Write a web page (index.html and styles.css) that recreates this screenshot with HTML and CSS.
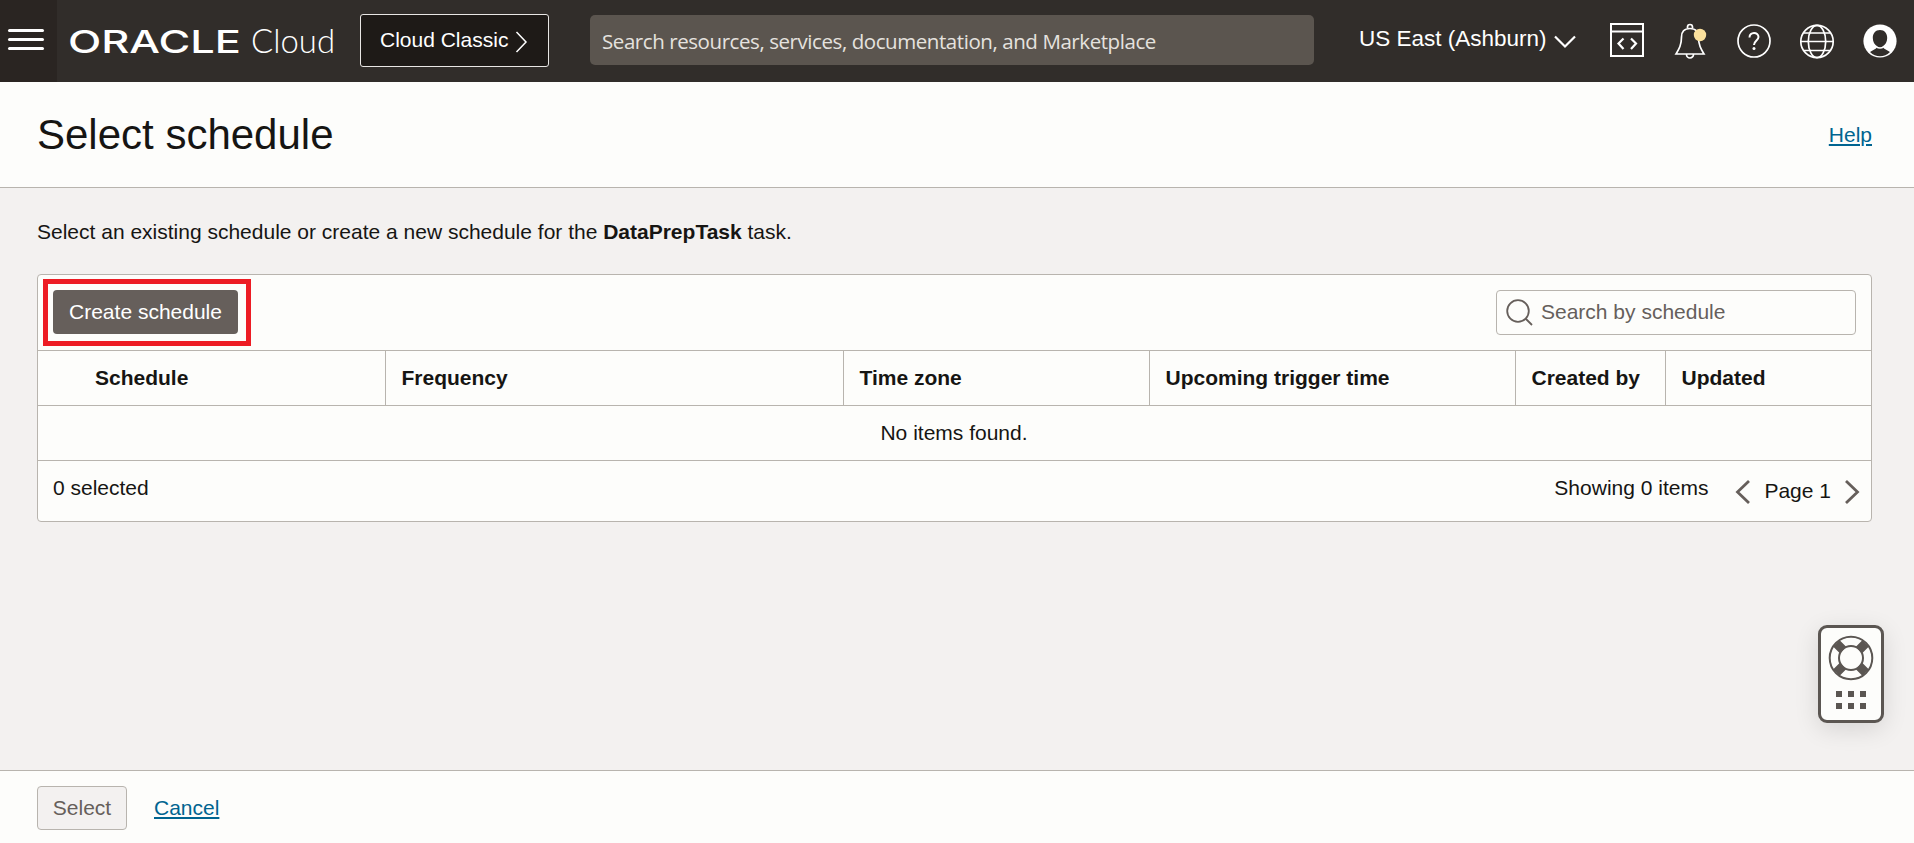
FILE: index.html
```html
<!DOCTYPE html>
<html lang="en">
<head>
<meta charset="utf-8">
<title>Select schedule</title>
<link rel="stylesheet" href="styles.css">
</head>
<body>
<header class="topbar">
  <button class="menu" aria-label="Menu"><span></span><span></span><span></span></button>
  <svg class="logo" width="270" height="40" viewBox="0 0 270 40" role="img">
    <text class="logo-oracle" x="-1" y="31.500" textLength="173" lengthAdjust="spacingAndGlyphs">ORACLE</text>
    <text class="logo-cloud" x="182" y="31.500" textLength="84" lengthAdjust="spacingAndGlyphs">Cloud</text>
  </svg>
  <a class="classic"><span>Cloud Classic</span>
    <svg width="14" height="24" viewBox="0 0 14 24"><path d="M1.500 2 11 12 1.500 22"/></svg>
  </a>
  <div class="global-search"><span>Search resources, services, documentation, and Marketplace</span></div>
  <div class="region">US East (Ashburn)
    <svg width="24" height="16" viewBox="0 0 24 16"><path d="M2 2.500 12 12.500 22 2.500"/></svg>
  </div>
  <div class="icons">
    <svg width="36" height="38" viewBox="0 0 36 38"><path d="M2 3H34V35H2ZM2 10.500H34" stroke-width="2"/><path d="M14.500 17.500 9.500 22.500 14.500 28M22 17.500 27 22.500 22 28" stroke-width="2.200"/></svg>
    <svg width="36" height="38" viewBox="0 0 36 38"><path d="M18 7.500C12 7.500 9.500 11 9.500 16 9.500 24 7 28 4 33H32C29 28 26.500 24 26.500 16 26.500 11 24 7.500 18 7.500ZM15.500 7V6A2.500 2.500 0 0 1 20.500 6V7M14.500 33.500A3.500 3.500 0 0 0 21.500 33.500"/><circle class="dot" cx="28" cy="14" r="6.200"/></svg>
    <svg width="36" height="38" viewBox="0 0 36 38"><circle cx="18" cy="20" r="16"/><path d="M13.500 16.500C13.500 10.500 22.500 10.500 22.500 16 22.500 19.500 18 19.500 18 24" stroke-width="2"/><circle class="fill" cx="18" cy="27.500" r="1.500"/></svg>
    <svg width="36" height="38" viewBox="0 0 36 38"><circle cx="18" cy="20.500" r="16.200"/><ellipse cx="18" cy="20.500" rx="8.700" ry="16.200"/><path d="M2 20.500H34M5 12H31M5 29.500H31"/></svg>
    <svg width="36" height="38" viewBox="0 0 36 38"><circle class="fill" cx="18" cy="20" r="16.600"/><path class="cut" d="M18 9C13.500 9 10.800 12.500 10.800 17 10.800 21 12.800 24 15.500 25.500L14 27.500 8 31Q12.500 35.300 18 35.300T28 31L22 27.500 20.500 25.500C23.200 24 25.200 21 25.200 17 25.200 12.500 22.500 9 18 9Z"/><path d="M14.500 26Q18 28 21.500 26" stroke-width="1.500"/></svg>
  </div>
</header>

<section class="titlebar">
  <h1>Select schedule</h1>
  <a class="link">Help</a>
</section>

<main class="content">
  <p class="intro">Select an existing schedule or create a new schedule for the <b>DataPrepTask</b> task.</p>
  <div class="panel">
    <div class="toolbar">
      <button class="create">Create schedule</button>
      <div class="filter">
        <svg width="28" height="28" viewBox="0 0 28 28"><circle cx="12" cy="12" r="10.800"/><path d="M19.500 19.500 26 26"/></svg>
        <span>Search by schedule</span>
      </div>
    </div>
    <div class="columns">
      <div class="col-first">Schedule</div><div>Frequency</div><div>Time zone</div><div>Upcoming trigger time</div><div>Created by</div><div>Updated</div>
    </div>
    <div class="empty">No items found.</div>
    <div class="foot">
      <span>0 selected</span>
      <span class="showing">Showing 0 items</span>
      <div class="pager">
        <svg width="16" height="26" viewBox="0 0 16 26"><path d="M14 2 2.500 13 14 24"/></svg>
        <span>Page 1</span>
        <svg width="16" height="26" viewBox="0 0 16 26"><path d="M2 2 13.500 13 2 24"/></svg>
      </div>
    </div>
  </div>
</main>

<footer class="actions">
  <button class="select" disabled>Select</button>
  <a class="link">Cancel</a>
</footer>

<aside class="support">
  <svg width="46" height="46" viewBox="0 0 46 46">
    <path class="ring-blocks" d="M8.500 8.500 15 15M37.500 8.500 31 15M8.500 37.500 15 31M37.500 37.500 31 31"/>
    <circle cx="23" cy="23" r="21.300"/><circle cx="23" cy="23" r="12"/>
  </svg>
  <div class="grip"><i></i><i></i><i></i><i></i><i></i><i></i></div>
</aside>
</body>
</html>
```
FILE: styles.css
```css
* { box-sizing: border-box; }
body {
  margin: 0;
  height: 843px;
  display: flex;
  flex-direction: column;
  overflow: hidden;
  background: #f3f1f0;
  color: #161513;
  font: 21px/30px "Liberation Sans", Arial, sans-serif;
}
button { font: inherit; }
svg { display: block; fill: none; flex: none; }

.topbar {
  display: flex;
  align-items: center;
  height: 82px;
  flex: none;
  padding-bottom: 2px;
  background: #312d2a;
  color: #fff;
}
.menu {
  width: 57px;
  height: 82px;
  margin-bottom: -2px;
  padding: 0 0 3px 8px;
  border: 0;
  background: #2a2522;
  display: flex;
  flex-direction: column;
  justify-content: center;
  gap: 6px;
}
.menu span { width: 36px; height: 3px; border-radius: 2px; background: #fff; }
.logo { margin: 2px 0 0 12px; fill: #fff; overflow: visible; }
.logo-oracle { font: 500 31.5px Inter, "Liberation Sans", sans-serif; }
.logo-cloud { font: 300 33px Lato, sans-serif; }
.classic {
  display: flex;
  align-items: center;
  gap: 7px;
  width: 189px;
  height: 53px;
  margin: 1px 41px 0 21px;
  padding: 0 0 0 19px;
  border: 1px solid #e8e6e4;
  border-radius: 3px;
  background: #1e1a17;
  white-space: nowrap;
}
.classic span { padding-bottom: 1px; }
.classic svg { stroke: #fff; stroke-width: 1.5; margin-top: 3px; }
.global-search {
  display: flex;
  align-items: center;
  width: 724px;
  height: 50px;
  margin-right: 45px;
  padding: 2px 0 0 12px;
  border-radius: 5px;
  background: #5b554f;
  color: #e5e2df;
  font: 20.5px "Open Sans", sans-serif;
  letter-spacing: -.43px;
  white-space: nowrap;
}
.region { display: flex; align-items: center; gap: 6px; width: 234px; font-size: 22.5px; white-space: nowrap; padding-bottom: 2px; }
.region svg { stroke: #fff; stroke-width: 2.2; margin-top: 6px; }
.icons { display: flex; gap: 27.3px; margin: -1px 0 0 16px; }
.icons svg { stroke: #fff; stroke-width: 1.7; }
.icons .dot { fill: #fbe19d; stroke: none; }
.icons .fill { fill: #fff; stroke: none; }
.icons .cut { fill: #312d2a; stroke: none; }

.titlebar {
  display: flex;
  align-items: center;
  justify-content: space-between;
  height: 106px;
  flex: none;
  padding: 0 42px 0 37px;
  background: #fdfdfb;
  border-bottom: 1px solid #b8b4ae;
}
h1 { margin: 0; font-size: 42px; line-height: 50px; font-weight: 400; }
.link { color: #006490; text-decoration: underline; text-decoration-thickness: 2px; text-underline-offset: 2px; }

.content { flex: 1; padding: 29px 42px 0 37px; }
.intro { margin: 0 0 27px; }
.panel { height: 248px; border: 1px solid #b8b4ae; border-radius: 4px; background: #fdfdfb; }
.toolbar { display: flex; justify-content: space-between; height: 75px; padding: 15px; }
.create {
  position: relative;
  width: 185px;
  height: 44px;
  padding: 0;
  border: 0;
  border-radius: 4px;
  background: #665f5b;
  color: #fff;
}
/* Callout frame around the primary action */
.create::after {
  content: "";
  position: absolute;
  inset: -11px -13px -12px -10px;
  border: 5px solid #ed1c24;
}
.filter {
  display: flex;
  align-items: center;
  gap: 7px;
  width: 360px;
  height: 45px;
  padding-left: 9px;
  border: 1px solid #b8b4ae;
  border-radius: 4px;
  color: #665f5b;
}
.filter span { padding-bottom: 1px; }
.filter svg { stroke: #665f5b; stroke-width: 1.8; }
.columns {
  display: grid;
  grid-template-columns: 347px 458px 306px 366px 150px 1fr;
  height: 56px;
  border: solid #b8b4ae;
  border-width: 1px 0;
  font-weight: 700;
  line-height: 54px;
}
.columns div { padding-left: 15.5px; border-left: 1px solid #b8b4ae; }
.columns .col-first { padding-left: 57px; border-left: 0; }
.empty { height: 55px; padding-right: 1px; line-height: 54px; text-align: center; border-bottom: 1px solid #b8b4ae; }
.foot { display: flex; padding: 12px 11px 0 15px; }
.showing { margin-left: auto; }
.pager { display: flex; align-items: center; gap: 13px; height: 30px; margin: 4px 0 0 27px; }
.pager span { padding-bottom: 2px; }
.pager svg { stroke: #665f5b; stroke-width: 2.8; }

.actions {
  display: flex;
  align-items: center;
  gap: 27px;
  height: 73px;
  flex: none;
  padding: 2px 0 0 37px;
  border-top: 1px solid #b8b4ae;
  background: #fdfdfb;
}
.select {
  width: 90px;
  height: 44px;
  padding: 0;
  border: 1px solid #b8b4ae;
  border-radius: 4px;
  background: #f3f1f0;
  color: #665f5b;
}

/* Floating help widget */
.support {
  position: absolute;
  left: 1818px;
  top: 625px;
  width: 66px;
  height: 98px;
  padding-top: 7px;
  border: 3px solid #5b5652;
  border-radius: 9px;
  background: #fdfdfb;
  box-shadow: 0 6px 24px rgba(0, 0, 0, .12);
  display: flex;
  flex-direction: column;
  align-items: center;
  gap: 10px;
}
.support circle { stroke: #5b5652; stroke-width: 2; }
.support .ring-blocks { stroke: #5b5652; stroke-width: 9; }
.grip { display: grid; grid-template-columns: repeat(3, 6px); gap: 6px; }
.grip i { height: 6px; background: #5b5652; }
```
